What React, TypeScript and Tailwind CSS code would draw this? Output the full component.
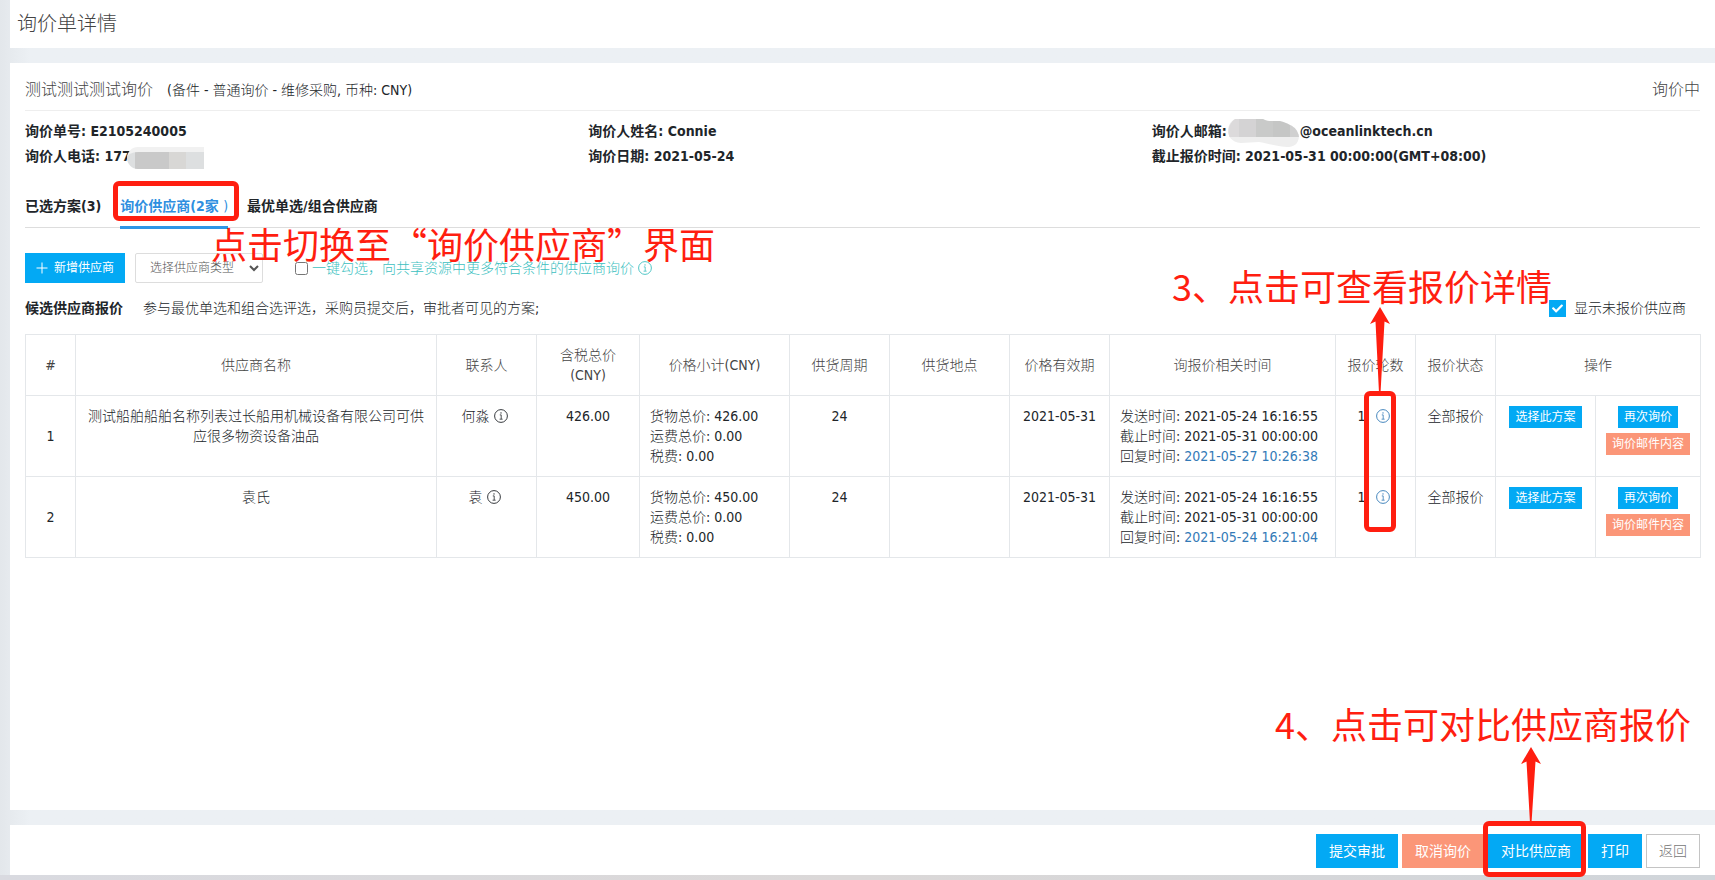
import { useState } from "react";
import type { ReactNode } from "react";
import { FaCheck } from "react-icons/fa";

type Quote = {
  id: number;
  supplier: string;
  contact: string;
  total: string;
  leadTime: string;
  validUntil: string;
  sentAt: string;
  deadline: string;
  repliedAt: string;
  rounds: number;
  status: string;
};

const quotes: Quote[] = [
  {
    id: 1,
    supplier: "测试船舶船舶名称列表过长船用机械设备有限公司可供应很多物资设备油品",
    contact: "何淼",
    total: "426.00",
    leadTime: "24",
    validUntil: "2021-05-31",
    sentAt: "2021-05-24 16:16:55",
    deadline: "2021-05-31 00:00:00",
    repliedAt: "2021-05-27 10:26:38",
    rounds: 1,
    status: "全部报价",
  },
  {
    id: 2,
    supplier: "袁氏",
    contact: "袁",
    total: "450.00",
    leadTime: "24",
    validUntil: "2021-05-31",
    sentAt: "2021-05-24 16:16:55",
    deadline: "2021-05-31 00:00:00",
    repliedAt: "2021-05-24 16:21:04",
    rounds: 1,
    status: "全部报价",
  },
];

function InfoIcon({ className = "" }: { className?: string }) {
  return (
    <svg viewBox="0 0 14 14" className={`inline-block size-3.5 shrink-0 ${className}`} fill="none" stroke="currentColor" aria-hidden="true">
      <circle cx="7" cy="7" r="6.4" strokeWidth="0.9" />
      <path d="M5.8 5.9H7.2V10M5.6 10.2H8.6" strokeWidth="0.8" />
      <circle cx="7" cy="3.9" r="0.7" fill="currentColor" stroke="none" />
    </svg>
  );
}

function Arrow({ className = "", height }: { className?: string; height: number }) {
  return (
    <svg width="20" height={height} viewBox={`0 0 20 ${height}`} className={`absolute ${className}`} aria-hidden="true">
      <path d={`M10 0L20 17L14.5 14.5L10.5 ${height}H9L5.5 14.5L0 17Z`} fill="#ff1e10" />
    </svg>
  );
}

function Note({ className, children }: { className: string; children: ReactNode }) {
  return (
    <p
      lang="zh-CN"
      className={`pointer-events-none absolute font-['Noto_Sans_CJK_SC',sans-serif] text-4xl leading-10 font-normal whitespace-nowrap text-[#ff1e10] ${className}`}
    >
      {children}
    </p>
  );
}

function Marker({ className }: { className: string }) {
  return <span className={`pointer-events-none absolute rounded-md border-5 border-[#ff1e10] ${className}`} />;
}

function SmallButton({ tone, children }: { tone: "blue" | "coral"; children: ReactNode }) {
  return (
    <button type="button" className={`h-[22px] px-1.5 text-xs leading-none font-normal whitespace-nowrap text-white ${tone === "blue" ? "bg-[#03a9f4]" : "bg-[#fb9678]"}`}>
      {children}
    </button>
  );
}

function FooterButton({ tone, children }: { tone: "blue" | "coral" | "plain"; children: ReactNode }) {
  const tones = {
    blue: "border-[#03a9f4] bg-[#03a9f4] text-white font-normal",
    coral: "border-[#fb9678] bg-[#fb9678] text-white font-normal",
    plain: "border-[#c4c4c4] bg-white text-[#777777]",
  };
  return (
    <button type="button" className={`h-[34px] border px-3 text-sm leading-none whitespace-nowrap ${tones[tone]}`}>
      {children}
    </button>
  );
}

const cell = "border border-[#e4e7ea] px-2.5 py-2.5 align-top";
const headCell = "border border-[#e4e7ea] px-2.5 py-2.5 align-middle font-light text-[#444444]";

export default function App() {
  const [showUnquoted, setShowUnquoted] = useState(true);
  const [shared, setShared] = useState(false);

  return (
    <div
      lang="zh-CN"
      className="flex min-h-screen flex-col bg-[#ecf0f4] font-['DejaVu_Sans_Condensed','Noto_Sans_CJK_SC',sans-serif] text-sm leading-5 font-light text-[#212529]"
    >
      <div className="flex grow flex-col bg-linear-to-r from-[#e3e7eb] to-[#ecf0f4] to-[30px] pl-2.5">
        <header className="flex h-12 items-center bg-white px-[7px]">
          <h1 className="text-xl leading-7 font-light text-[#444444]">询价单详情</h1>
        </header>

        <main className="mt-[15px] grow bg-white px-[15px] pb-8">
          <div className="flex items-center justify-between border-b border-[#eeeeee] pt-[15px] pb-2">
            <h2 className="flex items-center gap-3.5 font-light">
              <span className="text-base leading-6 text-[#444444]">测试测试测试询价</span>
              <span>(备件 - 普通询价 - 维修采购, 币种: CNY)</span>
            </h2>
            <span className="text-base leading-6 text-[#444444]">询价中</span>
          </div>

          <section className="-mr-[15px] grid grid-cols-3 pt-2 leading-[25px] font-bold">
            <div>
              <p>询价单号: E2105240005</p>
              <p className="relative">
                询价人电话: 177
                <span className="absolute top-[3px] left-[102px] flex h-[22px] w-[77px] overflow-hidden rounded-l-xl border-t-5 border-[#f1f1f1] bg-[#dddfe0]">
                  <span className="ml-2 w-[34px] bg-[#c9c9c9]" />
                  <span className="w-[17px] bg-[#d8d7d5]" />
                </span>
              </p>
            </div>
            <div>
              <p>询价人姓名: Connie</p>
              <p>询价日期: 2021-05-24</p>
            </div>
            <div>
              <p className="flex">
                询价人邮箱:
                <span className="relative w-[73px]">
                  <svg viewBox="0 0 72 28" className="absolute top-0 left-0 h-7 w-[72px]" aria-hidden="true">
                    <path d="M8 0H36C40 3 46 2 53 3C64 4 69 10 72 16C72 26 66 28 60 28C46 27 40 24 32 23C26 23 20 24 14 24C4 23 1 17 1 12C1 6 4 2 8 0Z" fill="#eeeeee" />
                    <path d="M8 0H12V18H2.500C1 14 0 6 8 0Z" fill="#dcdadb" />
                    <path d="M12 0H29V18H12Z" fill="#d4d3d4" />
                    <path d="M29 0H36C39 2 42 2 46 2V18H29Z" fill="#c9cac9" />
                    <path d="M46 2H53C57 3 60 4 63 6V18H46Z" fill="#c5c6c5" />
                    <path d="M63 6C68 8 71 12 72 18H63Z" fill="#d0d0d0" />
                  </svg>
                </span>
                @oceanlinktech.cn
              </p>
              <p>截止报价时间: 2021-05-31 00:00:00(GMT+08:00)</p>
            </div>
          </section>

          <nav className="relative mt-[26px] flex gap-[19px] border-b border-[#dddddd] font-bold">
            <button type="button" className="h-8 pb-2.5">已选方案(3)</button>
            <button type="button" className="relative -mb-0.5 h-[34px] border-b-3 border-[#2f96e6] pb-2.5 text-[#2f8fe0]">
              询价供应商(2家 <span className="font-light">)</span>
              <Marker className="-top-3.5 -left-[7px] h-10 w-[126px]" />
            </button>
            <button type="button" className="h-8 pb-2.5">最优单选/组合供应商</button>
            <Note className="top-7 left-[186px]">点击切换至“询价供应商”界面</Note>
          </nav>

          <div className="mt-[25px] flex items-center">
            <button type="button" className="flex h-[30px] items-center gap-1.5 bg-[#03a9f4] px-[11px] text-xs font-normal text-white">
              <svg viewBox="0 0 12 12" className="size-3" stroke="currentColor" aria-hidden="true">
                <path d="M6 0.500V11.500M0.500 6H11.500" />
              </svg>
              新增供应商
            </button>
            <select aria-label="选择供应商类型" className="ml-2.5 h-[30px] w-32 rounded-xs border border-[#dddddd] bg-white px-2.5 text-xs text-[#555555]">
              <option>选择供应商类型</option>
            </select>
            <label className="ml-8 flex items-center text-[#3dbfbf]">
              <input type="checkbox" checked={shared} onChange={(e) => setShared(e.target.checked)} className="mr-1 size-[13px]" />
              一键勾选，向共享资源中更多符合条件的供应商询价
              <InfoIcon className="ml-1" />
            </label>
          </div>

          <div className="mt-[15px] flex items-center pr-3.5">
            <strong className="font-bold">候选供应商报价</strong>
            <span className="ml-5">参与最优单选和组合选评选，采购员提交后，审批者可见的方案;</span>
            <label className="ml-auto flex items-center gap-2">
              <span className="relative flex size-[17px]">
                <input
                  type="checkbox"
                  checked={showUnquoted}
                  onChange={(e) => setShowUnquoted(e.target.checked)}
                  className="size-[17px] appearance-none border border-[#03a9f4] checked:bg-[#03a9f4]"
                />
                <FaCheck className="pointer-events-none absolute inset-0 m-auto size-[11px] text-white" />
              </span>
              显示未报价供应商
            </label>
          </div>

          <div className="-mr-px">
            <table className="mt-4 w-full table-fixed border-collapse text-center">
              <colgroup>
                <col className="w-[50px]" />
                <col />
                <col className="w-[100px]" />
                <col className="w-[103px]" />
                <col className="w-[150px]" />
                <col className="w-[100px]" />
                <col className="w-[120px]" />
                <col className="w-[100px]" />
                <col className="w-[226px]" />
                <col className="w-20" />
                <col className="w-20" />
                <col className="w-[100px]" />
                <col className="w-[105px]" />
              </colgroup>
              <thead>
                <tr>
                  <th className={headCell}>#</th>
                  <th className={headCell}>供应商名称</th>
                  <th className={headCell}>联系人</th>
                  <th className={headCell}>含税总价<br />(CNY)</th>
                  <th className={headCell}>价格小计(CNY)</th>
                  <th className={headCell}>供货周期</th>
                  <th className={headCell}>供货地点</th>
                  <th className={headCell}>价格有效期</th>
                  <th className={headCell}>询报价相关时间</th>
                  <th className={`relative ${headCell}`}>
                    报价轮数
                    <Note className="-top-[70px] -left-[164px]">3、点击可查看报价详情</Note>
                    <Arrow height={86} className="-top-7 left-[34px]" />
                    <Marker className="top-14 left-7 h-[141px] w-8" />
                  </th>
                  <th className={headCell}>报价状态</th>
                  <th className={headCell} colSpan={2}>操作</th>
                </tr>
              </thead>
              <tbody>
                {quotes.map((q) => (
                  <tr key={q.id} className="h-[81px]">
                    <td className="border border-[#e4e7ea] align-middle">{q.id}</td>
                    <td className={cell}>{q.supplier}</td>
                    <td className={cell}>
                      <span className="inline-flex items-center gap-1 pr-1">{q.contact}<InfoIcon /></span>
                    </td>
                    <td className={cell}>{q.total}</td>
                    <td className={`text-left ${cell}`}>
                      <p>货物总价: {q.total}</p>
                      <p>运费总价: 0.00</p>
                      <p>税费: 0.00</p>
                    </td>
                    <td className={cell}>{q.leadTime}</td>
                    <td className={cell} />
                    <td className={`whitespace-nowrap ${cell}`}>{q.validUntil}</td>
                    <td className={`text-left whitespace-nowrap ${cell}`}>
                      <p>发送时间: {q.sentAt}</p>
                      <p>截止时间: {q.deadline}</p>
                      <p>回复时间: <span className="text-[#337ab7]">{q.repliedAt}</span></p>
                    </td>
                    <td className={cell}>
                      <span className="inline-flex items-center gap-2.5 pr-1">{q.rounds}<InfoIcon className="text-[#337ab7]" /></span>
                    </td>
                    <td className={`whitespace-nowrap ${cell}`}>{q.status}</td>
                    <td className={cell}>
                      <SmallButton tone="blue">选择此方案</SmallButton>
                    </td>
                    <td className={cell}>
                      <div className="flex flex-col items-center gap-[5px]">
                        <SmallButton tone="blue">再次询价</SmallButton>
                        <SmallButton tone="coral">询价邮件内容</SmallButton>
                      </div>
                    </td>
                  </tr>
                ))}
              </tbody>
            </table>
          </div>
        </main>

        <footer className="mt-[15px] flex h-[50px] items-start justify-end gap-1 bg-white px-[15px] pt-[9px]">
          <FooterButton tone="blue">提交审批</FooterButton>
          <FooterButton tone="coral">取消询价</FooterButton>
          <div className="relative">
            <FooterButton tone="blue">对比供应商</FooterButton>
            <Note className="-top-[131px] -right-[107px]">4、点击可对比供应商报价</Note>
            <Arrow height={76} className="-top-[87px] left-[33px]" />
            <Marker className="-top-[13px] -left-[5px] h-14 w-[103px]" />
          </div>
          <FooterButton tone="blue">打印</FooterButton>
          <FooterButton tone="plain">返回</FooterButton>
        </footer>
      </div>
      <div className="h-[5px] bg-linear-to-r from-[#d9dae0] via-[#dbd8d8] to-[#d0d5da]" />
    </div>
  );
}
